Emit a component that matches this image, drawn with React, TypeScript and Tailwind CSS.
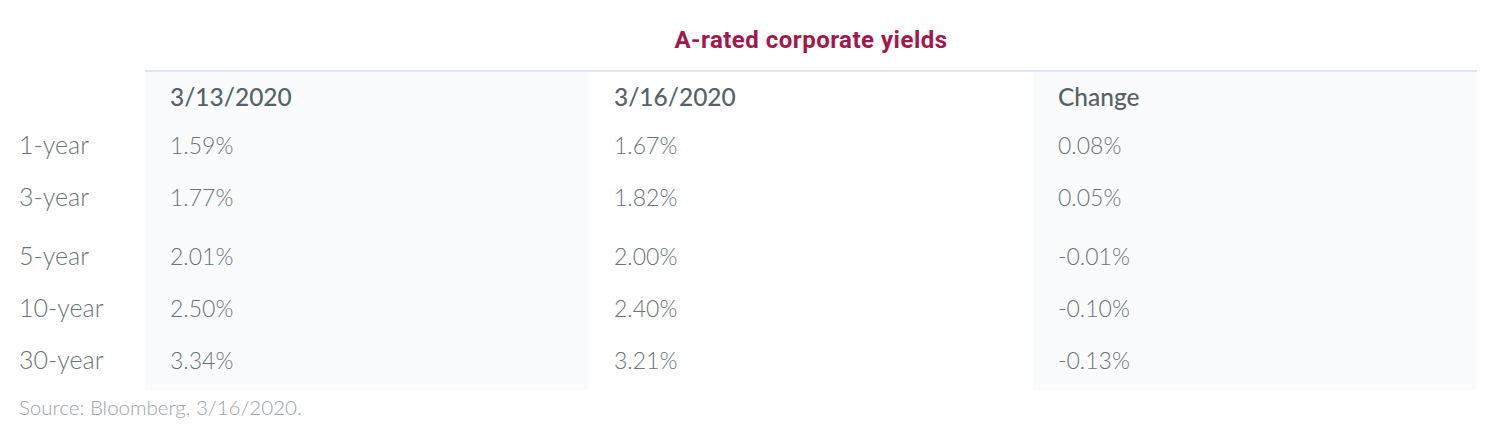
import React from 'react';

const rows = [
  { term: '1-year', a: '1.59%', b: '1.67%', change: '0.08%', h: 'h-[46px]' },
  { term: '3-year', a: '1.77%', b: '1.82%', change: '0.05%', h: 'h-[58px]' },
  { term: '5-year', a: '2.01%', b: '2.00%', change: '-0.01%', h: 'h-[60px]' },
  { term: '10-year', a: '2.50%', b: '2.40%', change: '-0.10%', h: 'h-[44px]' },
  { term: '30-year', a: '3.34%', b: '3.21%', change: '-0.13%', h: 'h-[60px]' },
];

const App = () => {
  return (
    <div className="w-[1500px] h-[442px] bg-white font-['Lato',sans-serif]">
      {/* Title */}
      <div className="flex pl-[145px] pr-[23px] pt-[26px] h-[70px]">
        <h2 className="flex-1 text-center font-['Roboto',sans-serif] font-bold text-[24px] tracking-[0.5px] leading-[28px] text-[#a3174b]">
          A-rated corporate yields
        </h2>
      </div>

      {/* Table */}
      <div className="grid grid-cols-[145px_444px_444px_444px]">
        <div />
        <div className="col-span-3 h-[2px] bg-[#dfe7eb]" />

        {/* Header row */}
        <div className="h-[50px]" />
        <div className="h-[50px] bg-[#f9fbfc] pl-[25px] flex items-center text-[24.5px] font-medium text-[#566268]">3/13/2020</div>
        <div className="h-[50px] pl-[25px] flex items-center text-[24.5px] font-medium text-[#566268]">3/16/2020</div>
        <div className="h-[50px] bg-[#f9fbfc] pl-[25px] flex items-center text-[24.5px] font-medium text-[#566268]">Change</div>

        {rows.map((r) => (
          <React.Fragment key={r.term}>
            <div className={`${r.h} pl-[19px] flex items-center text-[25px] font-light text-[#6b7478]`}>{r.term}</div>
            <div className={`${r.h} bg-[#f9fbfc] pl-[25px] flex items-center text-[23px] font-light text-[#6a7378]`}>{r.a}</div>
            <div className={`${r.h} pl-[25px] flex items-center text-[23px] font-light text-[#6a7378]`}>{r.b}</div>
            <div className={`${r.h} bg-[#f9fbfc] pl-[25px] flex items-center text-[23px] font-light text-[#6a7378]`}>{r.change}</div>
          </React.Fragment>
        ))}
      </div>

      {/* Source */}
      <p className="pl-[19px] pt-[3px] text-[20.5px] leading-[28px] font-light text-[#9ba3a7]">
        Source: Bloomberg, 3/16/2020.
      </p>
    </div>
  );
};

export default App;
